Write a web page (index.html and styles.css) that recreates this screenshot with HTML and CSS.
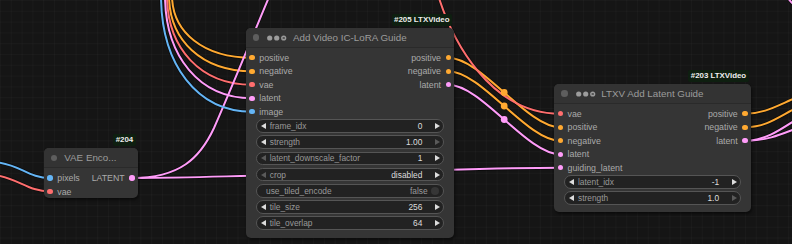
FILE: index.html
```html
<!DOCTYPE html>
<html lang="en">
<head>
  <meta charset="UTF-8">
  <meta name="viewport" content="width=device-width, initial-scale=1.0">
  <title>LTXVideo graph</title>
  <link rel="stylesheet" href="styles.css">
</head>
<body>
  <div class="canvas">
    <svg class="links" width="792" height="244" viewBox="0 0 792 244" fill="none">
      <defs>
        <path id="l-pos-in" d="M172,-5 C172,32.7 204,57.75 252,57.75"/>
        <path id="l-neg-in" d="M169,-5 C169,40.75 202.2,71.25 252,71.25"/>
        <path id="l-vae-in" d="M167,-5 C167,48.85 201,84.75 252,84.75"/>
        <path id="l-lat-in" d="M165,-5 C165,56.95 199.8,98.25 252,98.25"/>
        <path id="l-img-in" d="M161,-5 C161,65.05 197.4,111.75 252,111.75"/>
        <path id="l-pix" d="M-5,162 C20,164 28,178 50,178"/>
        <path id="l-vae204" d="M-5,175 C18,178 28,191.5 50,191.5"/>
        <path id="l-up" d="M132,178 C180,178 200,158 214,128 C235,80 255,30 272,-10"/>
        <path id="l-guide" d="M132,178 C239.3,178 452.7,167.75 560,167.75"/>
        <path id="l-vae203" d="M438,-5 C452,40 490,113.75 560,113.75"/>
        <path id="l-pos" d="M448.3,57.75 C481.2,57.75 527.1,127.25 560,127.25"/>
        <path id="l-neg" d="M448.3,71.25 C481.2,71.25 527.1,140.75 560,140.75"/>
        <path id="l-lat" d="M448.3,84.75 C481.2,84.75 527.1,154.25 560,154.25"/>
        <path id="l-out-pos" d="M745,113.75 C765,113.75 776,106 800,96"/>
        <path id="l-out-neg" d="M745,127.25 C767,127.25 778,117 800,106"/>
        <path id="l-out-lat1" d="M745,140.75 C765,140.75 780,130 800,117"/>
        <path id="l-out-lat2" d="M745,140.75 C768,140.75 782,134 800,127"/>
        <path id="l-corner" d="M786,-5 C789,0 791,3 796,6"/>
      </defs>

      <!-- dark outline under every link -->
      <g class="edge">
        <use href="#l-pos-in"/><use href="#l-neg-in"/><use href="#l-vae-in"/>
        <use href="#l-lat-in"/><use href="#l-img-in"/><use href="#l-pix"/>
        <use href="#l-vae204"/><use href="#l-up"/><use href="#l-guide"/>
        <use href="#l-vae203"/><use href="#l-pos"/><use href="#l-neg"/>
        <use href="#l-lat"/><use href="#l-out-pos"/><use href="#l-out-neg"/>
        <use href="#l-out-lat1"/><use href="#l-out-lat2"/><use href="#l-corner"/>
      </g>

      <g class="wire orange">
        <use href="#l-pos-in"/><use href="#l-neg-in"/><use href="#l-pos"/><use href="#l-neg"/>
        <use href="#l-out-pos"/><use href="#l-out-neg"/>
      </g>
      <g class="wire red">
        <use href="#l-vae-in"/><use href="#l-vae204"/><use href="#l-vae203"/>
      </g>
      <g class="wire pink">
        <use href="#l-lat-in"/><use href="#l-up"/><use href="#l-guide"/><use href="#l-lat"/>
        <use href="#l-out-lat1"/><use href="#l-out-lat2"/><use href="#l-corner"/>
      </g>
      <g class="wire blue">
        <use href="#l-img-in"/><use href="#l-pix"/>
      </g>

      <!-- link centre markers -->
      <circle class="marker orange" cx="504.2" cy="92.5" r="3.4"/>
      <circle class="marker orange" cx="504.2" cy="106" r="3.4"/>
      <circle class="marker pink" cx="504.2" cy="119.5" r="3.4"/>
    </svg>

    <!-- #204 VAE Encode -->
    <div class="node node-204">
      <div class="badge">#204</div>
      <div class="title">
        <i class="title-dot"></i>
        <span class="title-text">VAE Enco...</span>
      </div>
      <div class="body">
        <div class="row">
          <span class="slot in"><i class="dot blue"></i>pixels</span>
          <span class="slot out">LATENT<i class="dot pink"></i></span>
        </div>
        <div class="row">
          <span class="slot in"><i class="dot red"></i>vae</span>
        </div>
      </div>
    </div>

    <!-- #205 Add Video IC-LoRA Guide -->
    <div class="node node-205">
      <div class="badge">#205 LTXVideo</div>
      <div class="title">
        <i class="title-dot"></i>
        <svg class="title-icons" width="20" height="6" viewBox="0 0 20 6">
          <circle cx="2.7" cy="3" r="2.6"/>
          <circle cx="9.7" cy="3" r="2.6"/>
          <circle cx="16.7" cy="3" r="2.6"/>
          <path d="M15.6 1.9 L17.8 4.1 M17.8 1.9 L15.6 4.1"/>
        </svg>
        <span class="title-text">Add Video IC-LoRA Guide</span>
      </div>
      <div class="body">
        <div class="row">
          <span class="slot in"><i class="dot orange"></i>positive</span>
          <span class="slot out">positive<i class="dot orange"></i></span>
        </div>
        <div class="row">
          <span class="slot in"><i class="dot orange"></i>negative</span>
          <span class="slot out">negative<i class="dot orange"></i></span>
        </div>
        <div class="row">
          <span class="slot in"><i class="dot red"></i>vae</span>
          <span class="slot out">latent<i class="dot pink"></i></span>
        </div>
        <div class="row">
          <span class="slot in"><i class="dot pink"></i>latent</span>
        </div>
        <div class="row">
          <span class="slot in"><i class="dot blue"></i>image</span>
        </div>

        <div class="widgets">
          <div class="widget"><i class="arrow left"></i><span class="w-label">frame_idx</span><span class="w-value">0</span><i class="arrow right"></i></div>
          <div class="widget"><i class="arrow left"></i><span class="w-label">strength</span><span class="w-value">1.00</span><i class="arrow right dim"></i></div>
          <div class="widget"><i class="arrow left dim"></i><span class="w-label">latent_downscale_factor</span><span class="w-value">1</span><i class="arrow right"></i></div>
          <div class="widget"><i class="arrow left dim"></i><span class="w-label">crop</span><span class="w-value">disabled</span><i class="arrow right"></i></div>
          <div class="widget toggle"><span class="w-label">use_tiled_encode</span><span class="w-value off">false</span><i class="knob"></i></div>
          <div class="widget"><i class="arrow left"></i><span class="w-label">tile_size</span><span class="w-value">256</span><i class="arrow right"></i></div>
          <div class="widget"><i class="arrow left"></i><span class="w-label">tile_overlap</span><span class="w-value">64</span><i class="arrow right"></i></div>
        </div>
      </div>
    </div>

    <!-- #203 LTXV Add Latent Guide -->
    <div class="node node-203">
      <div class="badge">#203 LTXVideo</div>
      <div class="title">
        <i class="title-dot"></i>
        <svg class="title-icons" width="20" height="6" viewBox="0 0 20 6">
          <circle cx="2.7" cy="3" r="2.6"/>
          <circle cx="9.7" cy="3" r="2.6"/>
          <circle cx="16.7" cy="3" r="2.6"/>
          <path d="M15.6 1.9 L17.8 4.1 M17.8 1.9 L15.6 4.1"/>
        </svg>
        <span class="title-text">LTXV Add Latent Guide</span>
      </div>
      <div class="body">
        <div class="row">
          <span class="slot in"><i class="dot red"></i>vae</span>
          <span class="slot out">positive<i class="dot orange"></i></span>
        </div>
        <div class="row">
          <span class="slot in"><i class="dot orange"></i>positive</span>
          <span class="slot out">negative<i class="dot orange"></i></span>
        </div>
        <div class="row">
          <span class="slot in"><i class="dot orange"></i>negative</span>
          <span class="slot out">latent<i class="dot pink"></i></span>
        </div>
        <div class="row">
          <span class="slot in"><i class="dot pink"></i>latent</span>
        </div>
        <div class="row">
          <span class="slot in"><i class="dot pink"></i>guiding_latent</span>
        </div>

        <div class="widgets">
          <div class="widget"><i class="arrow left"></i><span class="w-label">latent_idx</span><span class="w-value">-1</span><i class="arrow right"></i></div>
          <div class="widget"><i class="arrow left"></i><span class="w-label">strength</span><span class="w-value">1.0</span><i class="arrow right dim"></i></div>
        </div>
      </div>
    </div>
  </div>
</body>
</html>
```

FILE: styles.css
```css
body {
  margin: 0;
  background: #151515;
  font-family: "Liberation Sans", Arial, sans-serif;
}

.canvas {
  position: relative;
  width: 792px;
  height: 244px;
  overflow: hidden;
  background-color: #151515;
  background-image:
    linear-gradient(rgba(255, 255, 255, 0.025) 1px, transparent 1px),
    linear-gradient(90deg, rgba(255, 255, 255, 0.025) 1px, transparent 1px);
  background-size: 10.8px 10.8px;
}

/* links */
.links {
  position: absolute;
  left: 0;
  top: 0;
}
.edge {
  stroke: rgba(0, 0, 0, 0.45);
  stroke-width: 3.6;
}
.wire {
  stroke-width: 2;
}
.wire.orange { stroke: #ffa931; }
.wire.red { stroke: #ff6e6e; }
.wire.pink { stroke: #ff9cf9; }
.wire.blue { stroke: #64b5f6; }
.marker.orange { fill: #ffa931; }
.marker.pink { fill: #ff9cf9; }

/* nodes */
.node {
  position: absolute;
  background: #353535;
  border-radius: 5px;
  box-shadow: 1px 2px 3px rgba(0, 0, 0, 0.5);
}
.node-205 { left: 246px; top: 28px; width: 208px; }
.node-203 { left: 554.3px; top: 84px; width: 196.4px; }
.node-204 { left: 44px; top: 148.3px; width: 93.7px; }

.badge {
  position: absolute;
  right: 2px;
  bottom: calc(100% + 2px);
  height: 12px;
  padding: 0 2.5px;
  background: #0e1f10;
  border-radius: 2px;
  color: #eee;
  font-size: 7.9px;
  font-weight: bold;
  line-height: 12px;
  white-space: nowrap;
}

.title {
  height: 20px;
  box-sizing: border-box;
  display: flex;
  align-items: center;
  padding-left: 6.7px;
  background: #333;
  border-radius: 5px 5px 0 0;
  border-bottom: 1px solid #2a2a2a;
}
.title-dot {
  width: 6.6px;
  height: 6.6px;
  border-radius: 50%;
  background: #5e5e5e;
}
.title-icons {
  margin-left: 8px;
  fill: #9c9c9c;
}
.title-icons path {
  stroke: #333;
  stroke-width: 0.8;
}
.title-text {
  margin-left: 5.7px;
  color: #9c9c9c;
  font-size: 9.8px;
  white-space: nowrap;
}
.node-204 .title-text {
  margin-left: 7px;
}

.body {
  padding: 3px 0 8px;
}
.node-203 .body { padding-bottom: 7px; }
.node-204 .body { padding-bottom: 0; }

.row {
  height: 13.5px;
  display: flex;
  align-items: center;
  padding: 0 3px 0 3.3px;
}
.slot {
  display: flex;
  align-items: center;
  color: #aaa;
  font-size: 8.8px;
  white-space: nowrap;
}
.slot.out {
  margin-left: auto;
}
.dot {
  width: 5.4px;
  height: 5.4px;
  border-radius: 50%;
}
.in .dot { margin-right: 4.6px; }
.out .dot { margin-left: 4.6px; }
.dot.orange { background: #ffa931; }
.dot.red { background: #ff6e6e; }
.dot.pink { background: #ff9cf9; }
.dot.blue { background: #64b5f6; }

/* widgets */
.widgets {
  display: flex;
  flex-direction: column;
  gap: 2.7px;
  padding: 0.8px 10px 0;
}
.widget {
  height: 13.5px;
  box-sizing: border-box;
  display: flex;
  align-items: center;
  padding: 0 3px 0 3.7px;
  border: 1px solid #555;
  border-radius: 7px;
  background: #222;
  font-size: 8.4px;
  white-space: nowrap;
}
.w-label {
  flex: 1;
  margin-left: 4px;
  color: #999;
}
.w-value {
  color: #ddd;
}
.w-value.off {
  color: #9a9a9a;
}
.arrow {
  width: 0;
  height: 0;
  border-top: 3px solid transparent;
  border-bottom: 3px solid transparent;
}
.arrow.left { border-right: 5.3px solid #ddd; }
.arrow.right { border-left: 5.3px solid #ddd; margin-left: 12.6px; }
.arrow.left.dim { border-right-color: #5a5a5a; }
.arrow.right.dim { border-left-color: #5a5a5a; }

.widget.toggle {
  padding: 0 3.7px 0 9px;
}
.toggle .w-label {
  margin-left: 0;
}
.knob {
  width: 8.6px;
  height: 8.6px;
  margin-left: 3px;
  border-radius: 50%;
  background: #363636;
}
```
